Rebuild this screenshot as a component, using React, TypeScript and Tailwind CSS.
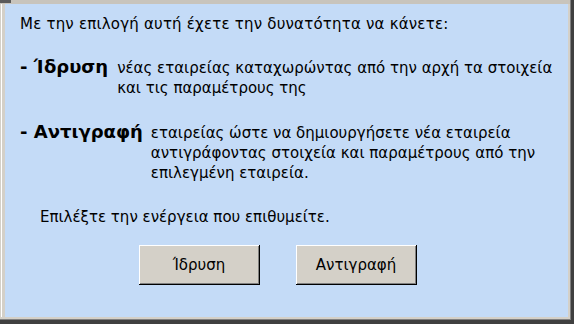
import React from "react";

const font = { fontFamily: '"DejaVu Sans", Verdana, sans-serif' };

function Btn({ label }: { label: string }) {
  return (
    <div className="w-[121px] h-[40px] bg-black pr-px pb-px">
      <div className="w-full h-full bg-[#808080] border-t border-l border-white pr-px pb-px">
        <div className="w-full h-full bg-[#d4d0c8] flex items-center justify-center text-[15px] text-black">
          {label}
        </div>
      </div>
    </div>
  );
}

export default function App() {
  return (
    <div className="w-[574px] h-[324px] bg-[#404040] pr-[3px] pb-[4px]" style={font}>
      <div className="w-full h-full flex flex-col bg-[#808080] pr-px pb-px">
        <div className="h-[4px] bg-[#c8c4bc] flex">
          <div className="w-[11px] h-[3px] bg-[#5a5a5a]" />
        </div>
        <div className="flex-1 flex bg-[#d4d0c8] pr-[2px] pb-[2px]">
          <div className="w-px bg-white ml-px" />
          <div className="w-[3px]" />
          <div className="flex-1 bg-[#c4dbf7] text-black text-[15px] leading-[20px] pl-[15px] pt-[10px] flex flex-col">
            <div className="whitespace-nowrap tracking-[0.2px]">Με την επιλογή αυτή έχετε την δυνατότητα να κάνετε:</div>
            <div className="flex items-baseline mt-[23px] whitespace-nowrap">
              <div className="font-bold text-[18px]">- Ίδρυση</div>
              <div className="ml-[9px]">
                νέας εταιρείας καταχωρώντας από την αρχή τα στοιχεία
                <br />
                και τις παραμέτρους της
              </div>
            </div>
            <div className="flex items-baseline mt-[24px] whitespace-nowrap">
              <div className="font-bold text-[18px]">- Αντιγραφή</div>
              <div className="ml-[8px]">
                εταιρείας ώστε να δημιουργήσετε νέα εταιρεία
                <br />
                αντιγράφοντας στοιχεία και παραμέτρους από την
                <br />
                επιλεγμένη εταιρεία.
              </div>
            </div>
            <div className="mt-[24px] ml-[20px] whitespace-nowrap">Επιλέξτε την ενέργεια που επιθυμείτε.</div>
            <div className="flex mt-[18px] ml-[119px] gap-[36px]">
              <Btn label="Ίδρυση" />
              <Btn label="Αντιγραφή" />
            </div>
          </div>
        </div>
      </div>
    </div>
  );
}
